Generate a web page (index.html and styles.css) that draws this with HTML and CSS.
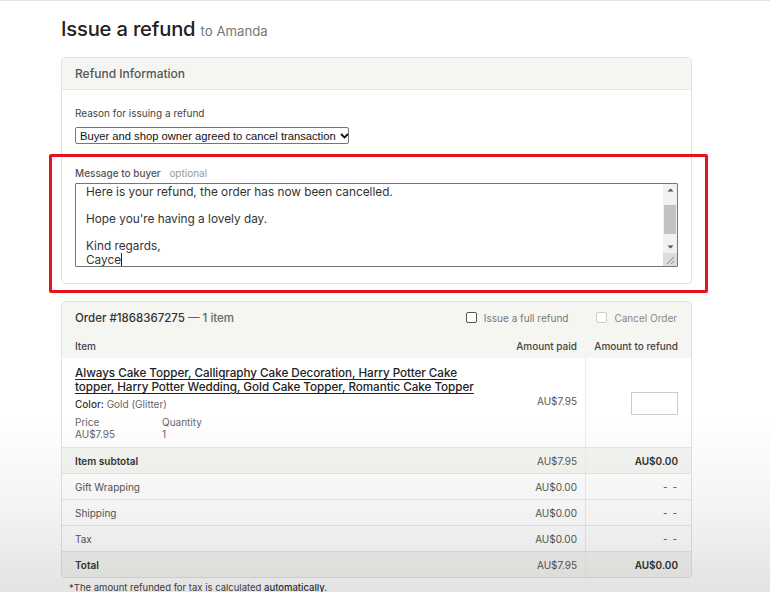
FILE: index.html
```html
<!DOCTYPE html>
<html lang="en">
<head>
<meta charset="utf-8">
<title>Issue a refund</title>
<link rel="stylesheet" href="styles.css">
</head>
<body>
<div class="topline"></div>
<main class="page">
  <h1 class="title">Issue a refund <span class="title-to">to Amanda</span></h1>

  <section class="panel info">
    <div class="panel-head">Refund Information</div>
    <div class="panel-body">
      <div class="field-label">Reason for issuing a refund</div>
      <div class="select">
        <span>Buyer and shop owner agreed to cancel transaction</span>
        <svg class="chev" width="9" height="6" viewBox="0 0 9 6"><path d="M1 1 L4.5 4.5 L8 1" fill="none" stroke="#111" stroke-width="1.8"/></svg>
      </div>
      <div class="field-label msg-label">Message to buyer <span class="opt">optional</span></div>
      <div class="textarea">
        <div class="ta-text">Here is your refund, the order has now been cancelled.<br><br>Hope you're having a lovely day.<br><br>Kind regards,<br>Cayce<span class="caret"></span></div>
        <div class="scrollbar">
          <svg class="arrow" width="13" height="12" viewBox="0 0 13 12"><path d="M3.5 7.5 L6.5 4.5 L9.5 7.5 Z" fill="#505050"/></svg>
          <div class="track"><div class="thumb"></div></div>
          <svg class="arrow" width="13" height="12" viewBox="0 0 13 12"><path d="M3.5 4.5 L6.5 7.5 L9.5 4.5 Z" fill="#505050"/></svg>
          <div class="grip"><svg width="13" height="13" viewBox="0 0 13 13"><path d="M11 4 L4 11 M11 8 L8 11" stroke="#888" stroke-width="1"/></svg></div>
        </div>
      </div>
    </div>
  </section>

  <section class="panel order">
    <div class="order-head">
      <div class="order-title">Order #1868367275 <span class="light">— 1 item</span></div>
      <label class="check"><span class="box"></span>Issue a full refund</label>
      <label class="check disabled"><span class="box"></span>Cancel Order</label>
    </div>
    <div class="row colhead">
      <div class="c-item">Item</div>
      <div class="c-paid">Amount paid</div>
      <div class="c-ref">Amount to refund</div>
    </div>
    <div class="row item-row">
      <div class="c-item">
        <a class="item-link" href="#">Always Cake Topper, Calligraphy Cake Decoration, Harry Potter Cake topper, Harry Potter Wedding, Gold Cake Topper, Romantic Cake Topper</a>
        <div class="variant"><span class="dark">Color:</span> Gold (Glitter)</div>
        <div class="pq">
          <div class="pq-col"><div>Price</div><div>AU$7.95</div></div>
          <div class="pq-col"><div>Quantity</div><div>1</div></div>
        </div>
      </div>
      <div class="c-paid mid">AU$7.95</div>
      <div class="c-ref mid"><span class="amount-input"></span></div>
    </div>
    <div class="row sum strong-row">
      <div class="c-item b">Item subtotal</div>
      <div class="c-paid">AU$7.95</div>
      <div class="c-ref b">AU$0.00</div>
    </div>
    <div class="row sum">
      <div class="c-item">Gift Wrapping</div>
      <div class="c-paid">AU$0.00</div>
      <div class="c-ref dash">- -</div>
    </div>
    <div class="row sum">
      <div class="c-item">Shipping</div>
      <div class="c-paid">AU$0.00</div>
      <div class="c-ref dash">- -</div>
    </div>
    <div class="row sum">
      <div class="c-item">Tax</div>
      <div class="c-paid">AU$0.00</div>
      <div class="c-ref dash">- -</div>
    </div>
    <div class="row sum strong-row total">
      <div class="c-item b">Total</div>
      <div class="c-paid">AU$7.95</div>
      <div class="c-ref b">AU$0.00</div>
    </div>
  </section>
  <p class="note">*The amount refunded for tax is calculated <span class="dark">automatically.</span></p>
</main>
<div class="highlight"></div>
<div class="shade"></div>
</body>
</html>
```

FILE: styles.css
```css
* { box-sizing: border-box; }
html, body { margin: 0; padding: 0; }
body {
  background: #fff;
  font-family: Inter, "Noto Sans", sans-serif;
  color: #333;
  width: 770px;
  height: 592px;
  overflow: hidden;
  position: relative;
}
.topline { height: 2px; border-top: 1px solid #e4e4e4; }
.page { margin-left: 61px; width: 631px; }
.title {
  margin: 13px 0 0;
  font-size: 20.2px;
  line-height: 28px;
  font-weight: 500;
  color: #222;
  letter-spacing: -0.2px;
}
.title-to { font-size: 13.2px; font-weight: 400; color: #777; letter-spacing: 0; }

.panel {
  border: 1px solid #e2e2de;
  border-radius: 4px;
  background: #fff;
  overflow: hidden;
}
.info { margin-top: 12px; }
.panel-head {
  background: #f5f5f2;
  height: 32px;
  border-bottom: 1px solid #e8e8e4;
  padding: 0 13px;
  display: flex;
  align-items: center;
  font-size: 12px;
  font-weight: 500;
  color: #555;
}
.panel-body { padding: 16px 13px 16px; }
.field-label { font-size: 10px; line-height: 14px; color: #444; }
.select {
  margin-top: 7px;
  width: 274px;
  height: 17px;
  border: 1px solid #767676;
  border-radius: 2px;
  display: flex;
  align-items: center;
  justify-content: space-between;
  padding: 0 4px 0 4px;
  font-family: "Liberation Sans", Arial, sans-serif;
  font-size: 11.2px;
  white-space: nowrap;
  color: #111;
}
.chev { margin-left: 4px; flex: none; }
.msg-label { margin-top: 22px; font-weight: 500; color: #555; }
.opt { font-weight: 400; color: #999; margin-left: 6px; }
.textarea {
  margin-top: 3px;
  height: 84px;
  border: 1px solid #767676;
  border-radius: 1px;
  display: flex;
  position: relative;
}
.ta-text {
  flex: 1;
  padding: 2px 10px;
  font-size: 11.8px;
  line-height: 13.4px;
  color: #333;
}
.caret { display: inline-block; width: 1px; height: 13px; background: #222; vertical-align: -2px; }
.scrollbar {
  width: 14px;
  background: #f1f1f1;
  display: flex;
  flex-direction: column;
  align-items: center;
}
.arrow { display: block; flex: none; }
.track { flex: 1; width: 100%; padding: 9px 1px 7px; }
.thumb { height: 29px; background: #c1c1c1; }
.grip { height: 13px; width: 14px; background: #dcdcdc; }
.grip svg { display: block; }

.order { margin-top: 17px; }
.order-head {
  background: #f5f5f2;
  height: 31px;
  padding: 0 14px 0 13px;
  display: flex;
  align-items: center;
  gap: 28px;
}
.order-title { flex: 1; font-size: 11.5px; font-weight: 500; color: #333; }
.light { color: #666; font-weight: 500; }
.check { display: flex; align-items: center; font-size: 10px; color: #777; }
.box {
  width: 11px; height: 11px;
  border: 1px solid #555;
  border-radius: 2px;
  margin-right: 7px;
  background: #fff;
}
.check.disabled { color: #888; }
.check.disabled .box { border-color: #ccc; }

.row {
  display: grid;
  grid-template-columns: 1fr 100px 106px;
  font-size: 10px;
  color: #555;
}
.row > div { display: flex; align-items: center; }
.c-item { padding-left: 13px; }
.c-paid { justify-content: flex-end; padding-right: 8px; }
.c-ref { justify-content: flex-end; padding-right: 13px; border-left: 1px solid #ececea; }
.colhead {
  background: #f5f5f2;
  height: 25px;
  font-weight: 500;
  color: #444;
}
.colhead .c-ref { border-left: none; }
.item-row { height: 89px; background: #fff; }
.item-row .c-item { display: block; padding-top: 8px; padding-right: 0; }
.item-link {
  display: block;
  font-size: 11.7px;
  line-height: 14px;
  font-weight: 500;
  color: #222;
  letter-spacing: -0.05px;
  text-decoration: underline;
  text-underline-offset: 2px;
}
.variant { margin-top: 3px; line-height: 14px; color: #666; }
.dark { color: #333; font-weight: 500; }
.pq { display: flex; margin-top: 5px; line-height: 12px; color: #666; }
.pq-col { width: 87px; }
.mid.c-paid { align-items: center; padding-bottom: 4px; }
.amount-input { width: 47px; height: 23px; border: 1px solid #ccc; background: #fff; }
.c-ref.mid { padding-top: 2px; }
.sum { height: 26px; border-top: 1px solid #e6e6e3; }
.strong-row { background: #f5f5f2; }
.b { font-weight: 600; color: #333; }
.dash { color: #555; letter-spacing: 1px; }
.total { height: 26px; }

.note { margin: 4px 0 0 8px; font-size: 9.5px; color: #444; }

.highlight {
  position: absolute;
  left: 49px; top: 154px;
  width: 659px; height: 139px;
  border: 3px solid #e8121a;
  border-radius: 2px;
}
.shade {
  position: absolute;
  inset: 0;
  pointer-events: none;
  background: linear-gradient(to bottom, rgba(0,0,0,0) 70%, rgba(0,0,0,0.045) 85%, rgba(0,0,0,0.11) 100%);
}
```
